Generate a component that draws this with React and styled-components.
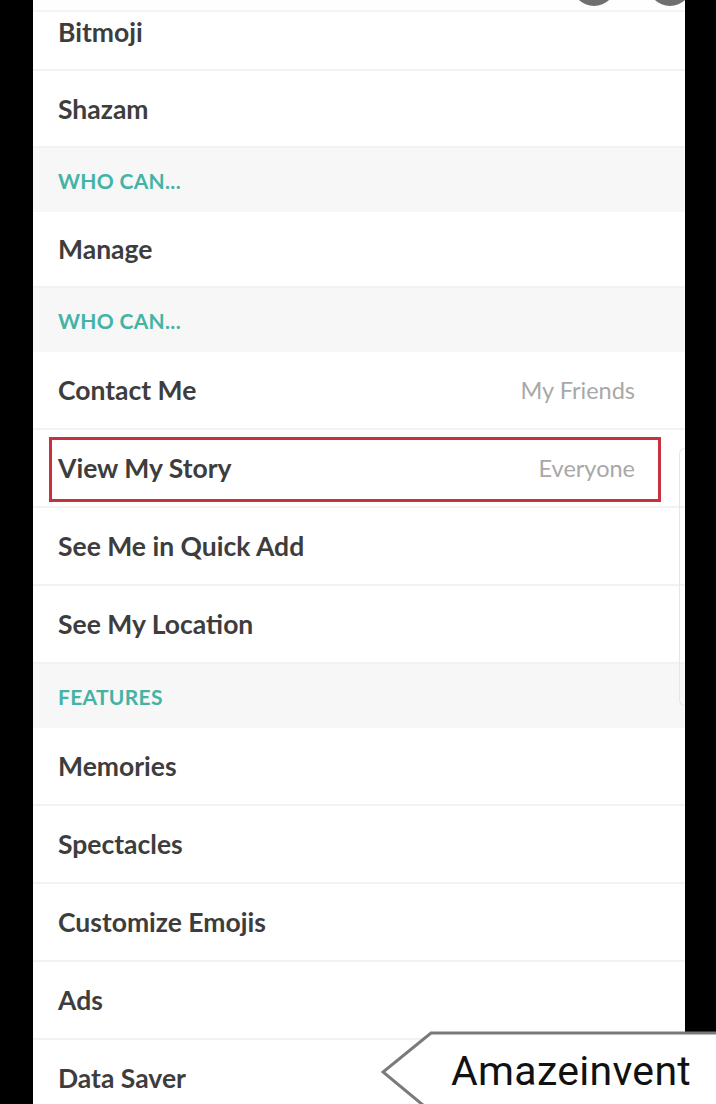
import styled, { createGlobalStyle } from "styled-components"

const Global = createGlobalStyle`
  html, body { margin: 0; padding: 0; background: #000; }
  body { font-family: "Lato", "Noto Sans", sans-serif; }
`

const Screen = styled.div`
  position: relative;
  width: 716px;
  height: 1104px;
  overflow: hidden;
  background: #000;
`

const Panel = styled.div`
  position: relative;
  margin-left: 33px;
  width: 652px;
  height: 100%;
  background: #fff;
  display: flex;
  flex-direction: column;
`

const TopStrip = styled.div`
  height: 12px;
  flex-shrink: 0;
  box-sizing: border-box;
  background: #fefefe;
  border-bottom: 2px solid #f4f4f4;
`

const Row = styled.div`
  position: relative;
  height: ${p => p.h || 78}px;
  flex-shrink: 0;
  box-sizing: border-box;
  display: flex;
  align-items: center;
  justify-content: space-between;
  padding: 0 50px ${p => p.pb || 0}px 25px;
  border-bottom: 2px solid #f2f2f2;
  font-size: 26.5px;
  font-weight: 700;
  color: #3d3d3d;

  ${p => p.marked && `
    &::after {
      content: "";
      position: absolute;
      left: 16px;
      right: 24px;
      top: 7px;
      bottom: 4px;
      border: 3px solid #c6333d;
    }
  `}
`

const Value = styled.span`
  font-size: 23.5px;
  font-weight: 400;
  color: #a8a8a8;
`

const Header = styled.div`
  height: 64px;
  flex-shrink: 0;
  box-sizing: border-box;
  display: flex;
  align-items: center;
  padding-left: 25px;
  background: #f7f7f7;
  font-size: 21px;
  font-weight: 700;
  color: #44b3a5;
  letter-spacing: 0.3px;
`

const Circle = styled.div`
  position: absolute;
  top: -38px;
  left: ${p => p.x}px;
  width: 44px;
  height: 44px;
  border-radius: 50%;
  background: #707070;
`

const Scroll = styled.div`
  position: absolute;
  right: 0;
  top: 448px;
  width: 6px;
  height: 258px;
  box-sizing: border-box;
  border: 1.5px solid #e6e6e6;
  border-right: none;
  border-radius: 6px 0 0 6px;
`

const Tag = styled.div`
  position: absolute;
  left: 381px;
  top: 1031px;
  width: 360px;
  height: 80px;
  display: flex;
  align-items: center;
  padding-left: 70px;
  box-sizing: border-box;

  svg {
    position: absolute;
    left: 0;
    top: 0;
  }
`

const TagText = styled.span`
  position: relative;
  font-family: "Roboto", "Noto Sans", sans-serif;
  font-size: 41px;
  color: #111;
  letter-spacing: 0.3px;
`

const rows = [
  { t: "row", label: "Bitmoji", h: 59, pb: 18 },
  { t: "row", label: "Shazam", h: 77 },
  { t: "head", label: "WHO CAN..." },
  { t: "row", label: "Manage", h: 76 },
  { t: "head", label: "WHO CAN..." },
  { t: "row", label: "Contact Me", value: "My Friends" },
  { t: "row", label: "View My Story", value: "Everyone", marked: true },
  { t: "row", label: "See Me in Quick Add" },
  { t: "row", label: "See My Location" },
  { t: "head", label: "FEATURES" },
  { t: "row", label: "Memories" },
  { t: "row", label: "Spectacles" },
  { t: "row", label: "Customize Emojis" },
  { t: "row", label: "Ads" },
  { t: "row", label: "Data Saver" },
]

export default function App() {
  return (
    <Screen>
      <Global />
      <Panel>
        <TopStrip />
        {rows.map((r, i) =>
          r.t === "head" ? (
            <Header key={i}>{r.label}</Header>
          ) : (
            <Row key={i} h={r.h} pb={r.pb} marked={r.marked}>
              {r.label}
              {r.value && <Value>{r.value}</Value>}
            </Row>
          )
        )}
        <Scroll />
      </Panel>
      <Circle x={572} />
      <Circle x={648} />
      <Tag>
        <svg width="360" height="80" viewBox="0 0 360 80">
          <path d="M360 2 L50 2 L2 41 L50 80 L360 80 Z" fill="#fff" />
          <path d="M360 2 L50 2 L2 41 L48 79" fill="none" stroke="#7a7a7a" strokeWidth="3" />
        </svg>
        <TagText>Amazeinvent</TagText>
      </Tag>
    </Screen>
  )
}
